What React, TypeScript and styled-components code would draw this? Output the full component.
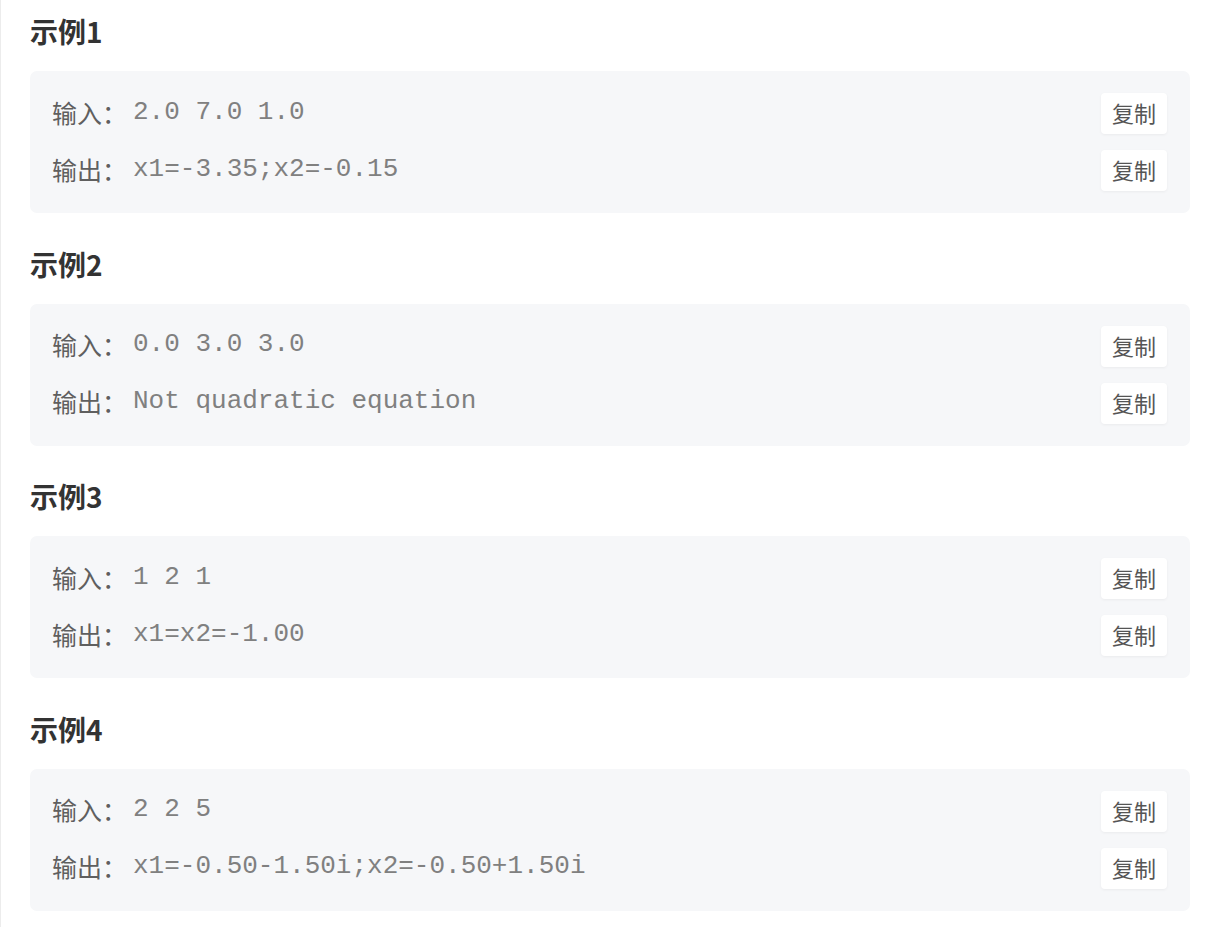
import React from "react";
import styled, { createGlobalStyle } from "styled-components";

const GlobalStyle = createGlobalStyle`
  html, body { margin: 0; padding: 0; background: #ffffff; }
  body { font-family: "Noto Sans CJK SC", "Noto Sans", sans-serif; }
`;

const Page = styled.div`
  box-sizing: border-box;
  min-height: 927px;
  border-left: 1px solid #ececec;
  padding: 14px 26px 0 29px;
`;

const Section = styled.section`
  display: flex;
  flex-direction: column;
  margin-bottom: 33.5px;
`;

const Heading = styled.h3`
  margin: 0 0 20px 0;
  height: 37px;
  line-height: 37px;
  font-size: 28px;
  font-weight: 700;
  color: #333333;
  font-family: "Noto Sans CJK SC", "Liberation Sans", sans-serif;
  position: relative;
  top: -1px;
`;

const Card = styled.div`
  box-sizing: border-box;
  background: #f6f7f9;
  border-radius: 7px;
  padding: 22px 23px 22px 22px;
  display: flex;
  flex-direction: column;
  gap: 16px;
`;

const Row = styled.div`
  display: flex;
  align-items: center;
  justify-content: space-between;
  height: 41px;
`;

const Content = styled.div`
  display: flex;
  align-items: center;
  white-space: pre;
`;

const Label = styled.span`
  font-size: 25px;
  color: #5f5f5f;
  font-family: "Noto Sans CJK SC", sans-serif;
  margin-right: 6px;
  position: relative;
  top: -2px;
`;

const Value = styled.span`
  font-family: "Liberation Mono", "Courier New", monospace;
  font-size: 26px;
  color: #808080;
  position: relative;
  top: -2px;
`;

const CopyButton = styled.button`
  box-sizing: border-box;
  height: 41px;
  padding: 0 11px 2px;
  border: none;
  border-radius: 4px;
  background: #ffffff;
  box-shadow: 0 1px 3px rgba(0, 0, 0, 0.05);
  font-family: "Noto Sans CJK SC", sans-serif;
  font-size: 22px;
  color: #555555;
  cursor: pointer;
  line-height: 39px;
`;

const examples = [
  { input: "2.0 7.0 1.0", output: "x1=-3.35;x2=-0.15" },
  { input: "0.0 3.0 3.0", output: "Not quadratic equation" },
  { input: "1 2 1", output: "x1=x2=-1.00" },
  { input: "2 2 5", output: "x1=-0.50-1.50i;x2=-0.50+1.50i" },
];

export default function App() {
  return (
    <>
      <GlobalStyle />
      <Page>
        {examples.map((ex, i) => (
          <Section key={i}>
            <Heading>示例{i + 1}</Heading>
            <Card>
              <Row>
                <Content>
                  <Label>输入：</Label>
                  <Value>{ex.input}</Value>
                </Content>
                <CopyButton>复制</CopyButton>
              </Row>
              <Row>
                <Content>
                  <Label>输出：</Label>
                  <Value>{ex.output}</Value>
                </Content>
                <CopyButton>复制</CopyButton>
              </Row>
            </Card>
          </Section>
        ))}
      </Page>
    </>
  );
}
